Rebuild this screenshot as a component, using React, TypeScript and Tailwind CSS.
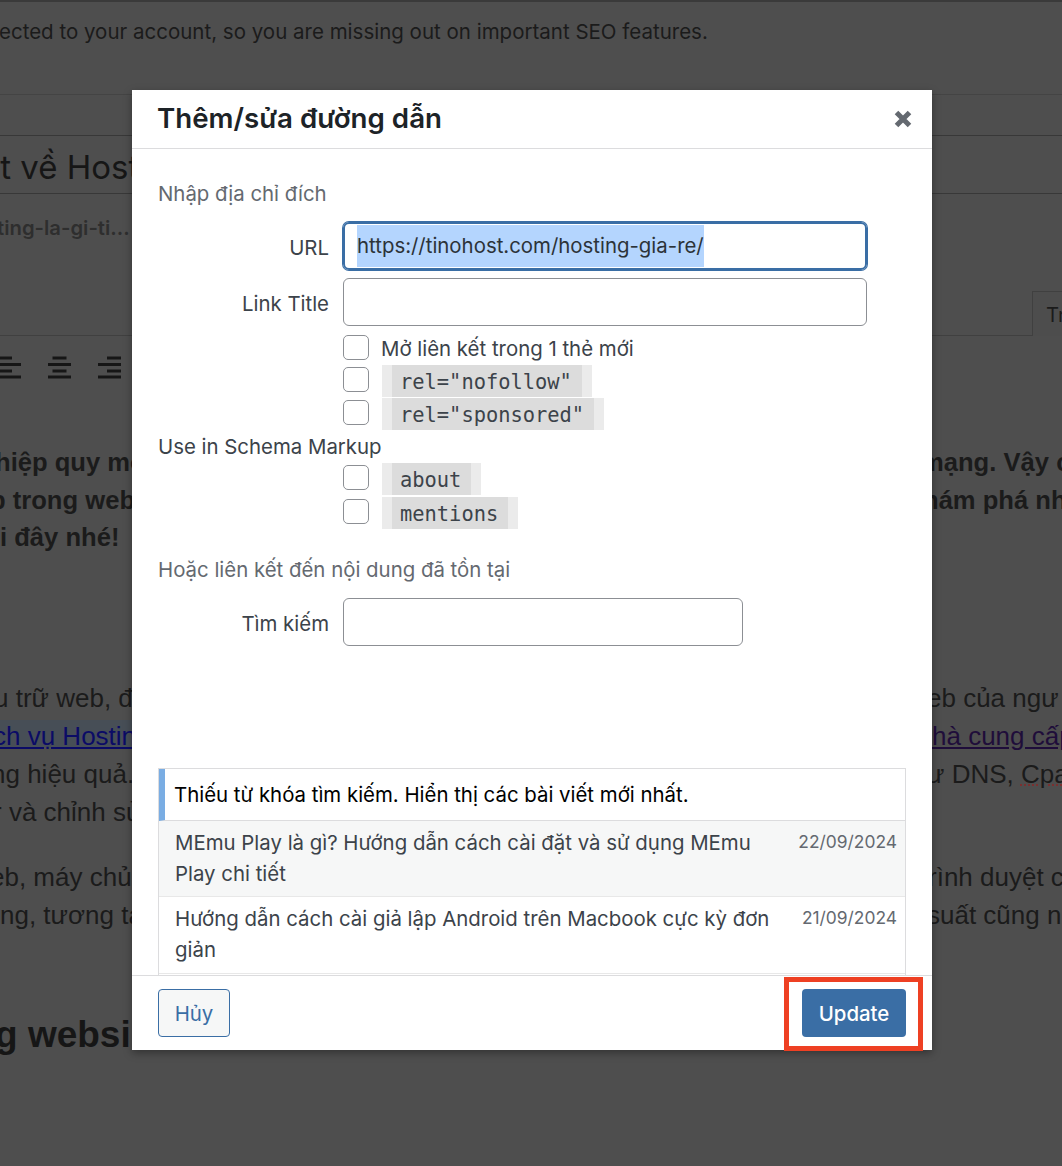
const SANS = "font-['Inter','Noto_Sans',sans-serif]"

const options = [
  { label: 'rel="nofollow"' },
  { label: 'rel="sponsored"' },
]

const schemaOptions = [{ label: 'about' }, { label: 'mentions' }]

// x is where the short line starts; long lines fill the icon
function AlignIcon({ x }: { x: number }) {
  return (
    <svg width="23" height="24" viewBox="0 0 23 24" className="shrink-0 text-[#161616]" fill="currentColor">
      <rect x={x} y="1.5" width="14" height="3" />
      <rect x="0" y="8" width="23" height="3" />
      <rect x={x} y="14.5" width="14" height="3" />
      <rect x="0" y="20.5" width="23" height="3" />
    </svg>
  )
}

function ArticleRow({
  left,
  right,
  className,
}: {
  left: React.ReactNode
  right?: React.ReactNode
  className: string
}) {
  return (
    <div className={`flex justify-between whitespace-nowrap font-['Liberation_Sans',sans-serif] text-[#1b1b1b] ${className}`}>
      <div className="w-[132px] overflow-hidden">{left}</div>
      <div className="w-[130px] overflow-hidden">{right}</div>
    </div>
  )
}

function Checkbox() {
  return <span className="block h-[25px] w-[26px] shrink-0 rounded-[5px] border border-[#8c8f94] bg-white" />
}

function CodeOption({ label }: { label: string }) {
  return (
    <div className="flex h-[33px] items-center">
      <Checkbox />
      <code className="ml-[13px] mt-[2px] h-[32px] bg-[#ebebeb] px-[10px] font-['DejaVu_Sans_Mono',monospace] text-[20.4px] leading-[34px] text-[#3c434a]">
        <span className="inline-block h-[32px] bg-[#dcdcdc] pl-[8px] pr-[10px]">{label}</span>
      </code>
    </div>
  )
}

function FormRow({ label, children }: { label: string; children: React.ReactNode }) {
  return (
    <div className="flex items-center">
      <label className="w-[171px] pt-[3px] text-right">{label}</label>
      <div className="ml-[14px]">{children}</div>
    </div>
  )
}

export default function App() {
  return (
    <div className={`relative h-[1166px] w-full overflow-hidden bg-[#4e4e4e] ${SANS}`}>
      {/* page behind the dialog */}
      <div className="h-[2px] bg-[#3a3a3a]" />
      <p className="mt-[18px] -ml-[1px] h-[74px] whitespace-nowrap text-[20.5px] leading-[24px] text-[#1b1b1b]">
        ected to your account, so you are missing out on important SEO features.
      </p>
      <div className="h-[41px] border-t border-[#444444]" />
      <div className="h-[59px] overflow-hidden border-y border-[#383838] text-[33px] leading-[63px] text-[#161616]">
        <div className="-ml-[19px] whitespace-nowrap">ết về Host</div>
      </div>
      <div className="h-[97px] whitespace-nowrap pt-[22px] text-[20.3px] font-semibold leading-[24px] text-[#2e2e2e]">
        <div className="-ml-[3px]">ting-la-gi-ti...</div>
      </div>
      <div className="flex h-[45px] justify-end border-b border-[#404040]">
        <div className="h-[45px] w-[30px] overflow-hidden whitespace-nowrap border-l border-t border-[#404040] bg-[#4d4d4d] pl-[13px] pt-[11px] text-[20.3px] leading-[24px] text-[#1b1b1b]">
          Tr
        </div>
      </div>
      <div className="-ml-[2px] flex h-[56px] items-center gap-[27px] pt-[6px]">
        <AlignIcon x={0} />
        <AlignIcon x={4.5} />
        <AlignIcon x={9} />
      </div>

      <div className="pt-[51px]">
        <ArticleRow
          className="h-[38px] text-[25.6px] font-bold leading-[38px]"
          left={<span className="-ml-[5px] block">hiệp quy mô</span>}
          right={<span className="-ml-[11px] block">mạng. Vậy c</span>}
        />
        <ArticleRow
          className="h-[37px] text-[25.6px] font-bold leading-[38px]"
          left={<span className="-ml-[10px] block">p trong web</span>}
          right={<span className="-ml-[9px] block">hám phá nh</span>}
        />
        <ArticleRow className="h-[161px] text-[25.6px] font-bold leading-[38px]" left="i đây nhé!" />
        <ArticleRow
          className="h-[38px] text-[26px] leading-[38px]"
          left={<span className="-ml-[6px] block">u trữ web, đ</span>}
          right={<span className="-ml-[5px] block">eb của ngư</span>}
        />
        <ArticleRow
          className="h-[38px] text-[26px] leading-[38px]"
          left={
            <span className="-ml-[7px] mt-[3px] block h-[28px] bg-[#474e56] leading-[32px] text-[#0b0b66] underline">
              ch vụ Hostin
            </span>
          }
          right={<span className="block text-[#1f0d3a] underline">hà cung cấp</span>}
        />
        <ArticleRow
          className="h-[38px] text-[26px] leading-[38px]"
          left={<span className="-ml-[9px] block">ng hiệu quả.</span>}
          right={
            <span className="-ml-[5px] block">
              ư DNS, <span className="underline decoration-dotted decoration-2 decoration-[#7a3030]">Cpa</span>
            </span>
          }
        />
        <ArticleRow
          className="h-[65px] text-[26px] leading-[38px]"
          left={<span className="-ml-[7px] block">r và chỉnh sử</span>}
        />
        <ArticleRow
          className="h-[38px] text-[26px] leading-[38px]"
          left={<span className="-ml-[10px] block">eb, máy chủ</span>}
          right={<span className="-ml-[4px] block">rình duyệt c</span>}
        />
        <ArticleRow
          className="h-[117px] text-[26px] leading-[38px]"
          left="ng, tương ta"
          right={<span className="-ml-[5px] block">suất cũng n</span>}
        />
        <ArticleRow
          className="text-[37px] font-bold leading-[44px] text-[#161616]"
          left={<span className="-ml-[5px] block">g websi</span>}
        />
      </div>

      {/* dialog */}
      <div className="absolute left-[132px] top-[90px] flex h-[960px] w-[800px] flex-col bg-white text-[20.4px] leading-[24px] text-[#3c434a] shadow-[0_3px_8px_rgba(0,0,0,0.35)]">
        <div className="flex h-[59px] shrink-0 items-center justify-between border-b border-[#dcdcde] pl-[25px] pr-[20px]">
          <h1 className="pb-[2px] text-[27.7px] font-semibold text-[#1d2327]">Thêm/sửa đường dẫn</h1>
          <svg width="18" height="18" viewBox="0 0 18 18" stroke="#646970" strokeWidth="5" aria-label="Close">
            <path d="M2.5 2.5 L15.5 15.5 M15.5 2.5 L2.5 15.5" />
          </svg>
        </div>

        <div className="min-h-0 flex-1 overflow-hidden px-[26px] pt-[33px]">
          <p className="text-[#646970]">Nhập địa chỉ đích</p>
          <div className="mt-[16px]">
            <FormRow label="URL">
              <div className="flex h-[48px] w-[524px] items-center rounded-[6px] border-2 border-[#3a6ea5] pl-[12px] shadow-[0_0_0_1px_#3a6ea5]">
                <span className="bg-[#b4d5fe] leading-[42px] text-[#2c3338]">https://tinohost.com/hosting-gia-re/</span>
              </div>
            </FormRow>
          </div>
          <div className="mt-[8px]">
            <FormRow label="Link Title">
              <input className="block h-[48px] w-[524px] rounded-[6px] border border-[#8c8f94] bg-white" />
            </FormRow>
          </div>
          <div className="ml-[185px] mt-[6px]">
            <div className="flex h-[31px] items-center">
              <Checkbox />
              <span className="ml-[12px] pt-[2px]">Mở liên kết trong 1 thẻ mới</span>
            </div>
            {options.map((o) => (
              <CodeOption key={o.label} label={o.label} />
            ))}
          </div>
          <p className="mt-[1px] h-[31px] leading-[33px]">Use in Schema Markup</p>
          <div className="ml-[185px] flex flex-col gap-[1px]">
            {schemaOptions.map((o) => (
              <CodeOption key={o.label} label={o.label} />
            ))}
          </div>
          <p className="mt-[30px] text-[#646970]">Hoặc liên kết đến nội dung đã tồn tại</p>
          <div className="mt-[16px]">
            <FormRow label="Tìm kiếm">
              <input className="block h-[48px] w-[400px] rounded-[6px] border border-[#8c8f94] bg-white" />
            </FormRow>
          </div>

          <div className="mt-[122px] h-[300px] w-[748px] border border-[#dcdcde]">
            <div className="flex h-[52px] items-center border-b border-[#dcdcde] border-l-[6px] border-l-[#7aade3] pl-[9px] text-black">
              Thiếu từ khóa tìm kiếm. Hiển thị các bài viết mới nhất.
            </div>
            <div className="flex h-[76px] justify-between border-b border-[#e8e8e8] bg-[#f6f7f7] pl-[16px] pr-[8px] pt-[6px] leading-[31px]">
              <span className="w-[600px]">MEmu Play là gì? Hướng dẫn cách cài đặt và sử dụng MEmu Play chi tiết</span>
              <span className="text-[17.4px] leading-[30px] text-[#646970]">22/09/2024</span>
            </div>
            <div className="flex h-[77px] justify-between border-b border-[#e8e8e8] pl-[16px] pr-[8px] pt-[6px] leading-[31px]">
              <span className="w-[600px]">Hướng dẫn cách cài giả lập Android trên Macbook cực kỳ đơn giản</span>
              <span className="text-[17.4px] leading-[30px] text-[#646970]">21/09/2024</span>
            </div>
          </div>
        </div>

        <div className="flex h-[75px] shrink-0 items-center justify-between border-t border-[#dcdcde] bg-white px-[26px]">
          <button className="h-[48px] w-[72px] rounded-[4px] border border-[#3a6ea5] bg-[#f6f7f7] pt-[2px] text-[#3a6ea5]">Hủy</button>
          <button className="h-[48px] w-[104px] rounded-[4px] bg-[#3a6ea5] pt-[2px] font-medium text-white">Update</button>
        </div>
      </div>

      {/* annotation around the primary button */}
      <div className="absolute left-[784px] top-[977px] h-[74px] w-[139px] border-[5px] border-[#ee4023]" />
    </div>
  )
}
